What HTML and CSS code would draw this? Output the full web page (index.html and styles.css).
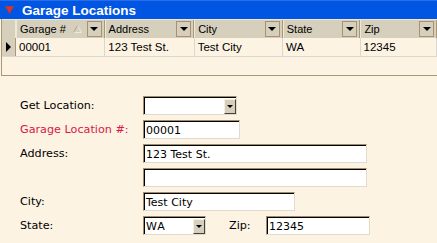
FILE: index.html
```html
<!DOCTYPE html>
<html>
<head>
<meta charset="utf-8">
<link rel="stylesheet" href="styles.css">
</head>
<body>
<div class="titlebar">
  <svg class="tri" width="9" height="8" viewBox="0 0 9 8"><path d="M0.5 0.5 H8.5 L4.5 7.5 Z" fill="#e0303a" stroke="#a04040" stroke-width="1"/></svg>
  <span class="title">Garage Locations</span>
</div>
<div class="grid">
  <div class="hrow">
    <div class="sel"></div>
    <div class="hcell c1"><span class="htext">Garage #</span>
      <svg class="sort" width="9" height="8" viewBox="0 0 9 8"><path d="M4.5 0.5 L8.5 7.5 H0.5 Z" fill="none" stroke="#ece8dc" stroke-width="1"/><path d="M4.5 0.5 L0.5 7.5" stroke="#a8a08c" stroke-width="1"/></svg>
      <span class="dd"><i></i></span></div>
    <div class="hcell c2"><span class="htext">Address</span><span class="dd"><i></i></span></div>
    <div class="hcell c3"><span class="htext">City</span><span class="dd"><i></i></span></div>
    <div class="hcell c4"><span class="htext">State</span><span class="dd"><i></i></span></div>
    <div class="hcell c5"><span class="htext">Zip</span><span class="dd"><i></i></span></div>
  </div>
  <div class="drow">
    <div class="sel"><span class="ptr"></span></div>
    <div class="dcell c1">00001</div>
    <div class="dcell c2">123 Test St.</div>
    <div class="dcell c3">Test City</div>
    <div class="dcell c4">WA</div>
    <div class="dcell c5">12345</div>
  </div>
  <div class="empty"></div>
</div>
<div class="form">
  <label class="lbl">Get Location:</label>
  <div class="fld"><div class="box combo w94"><span class="val"></span><span class="cbtn"><i></i></span></div></div>
  <label class="lbl req">Garage Location #:</label>
  <div class="fld"><div class="box w97"><span class="val">00001</span></div></div>
  <label class="lbl">Address:</label>
  <div class="fld"><div class="box w224"><span class="val">123 Test St.</span></div></div>
  <label class="lbl"></label>
  <div class="fld"><div class="box w224"><span class="val"></span></div></div>
  <label class="lbl">City:</label>
  <div class="fld"><div class="box w152"><span class="val">Test City</span></div></div>
  <label class="lbl">State:</label>
  <div class="fld row">
    <div class="box combo w63"><span class="val sp">WA</span><span class="cbtn"><i></i></span></div>
    <label class="lbl zip">Zip:</label>
    <div class="box w104"><span class="val">12345</span></div>
  </div>
</div>
</body>
</html>
```
FILE: styles.css
```css
html, body {
  margin: 0;
  padding: 0;
  background: #fcf3e3;
  width: 437px;
  height: 243px;
  overflow: hidden;
}
body {
  font-family: "DejaVu Sans", Verdana, sans-serif;
  font-size: 11px;
  color: #000;
}
.titlebar {
  background: #0055e2;
  border-top: 1px solid #2a6ee6;
  display: flex;
  align-items: center;
  box-sizing: border-box;
  height: 19px;
}
.tri {
  margin-left: 5px;
  margin-right: 8px;
}
.title {
  color: #fff;
  font-weight: bold;
  font-size: 13.5px;
  letter-spacing: 0;
  font-family: "Liberation Sans", Arial, sans-serif;
}
.grid {
  border-left: 1px solid #a89878;
  border-bottom: 1px solid #a89878;
  margin-left: 1px;
  height: 57px;
  box-sizing: border-box;
  font-family: "Liberation Sans", Arial, sans-serif;
  font-size: 11px;
}
.hrow, .drow {
  display: flex;
}
.hrow {
  height: 19px;
  background: #d6cfbc;
  border-top: 1px solid #ece8dc;
  box-sizing: border-box;
}
.sel {
  width: 13px;
  flex: none;
  border-right: 1px solid #a89878;
  position: relative;
}
.hrow .sel {
  border-right: 1px solid #ece8dc;
}
.hcell {
  display: flex;
  align-items: center;
  border-right: 1px solid #a89878;
  border-left: 1px solid #ece8dc;
  padding-left: 3px;
  box-sizing: border-box;
  position: relative;
}
.htext {
  flex: 1;
}
.c1 { width: 89px; }
.c2 { width: 90px; }
.c3 { width: 89px; }
.c4 { width: 78px; }
.c5 { width: 77px; }
.sort {
  margin-right: 5px;
}
.dd {
  width: 13px;
  height: 14px;
  border: 1px solid #a89070;
  margin-right: 2px;
  display: flex;
  align-items: center;
  justify-content: center;
}
.dd i, .cbtn i {
  width: 0;
  height: 0;
  border-left: 4px solid transparent;
  border-right: 4px solid transparent;
  border-top: 4px solid #000;
}
.drow {
  height: 19px;
  background: #fcf3e3;
  border-bottom: 1px solid #dcd8d0;
  box-sizing: border-box;
}
.drow .sel {
  background: #d6cfbc;
  border-right: 1px solid #a89878;
}
.ptr {
  position: absolute;
  left: 4px;
  top: 4px;
  width: 0;
  height: 0;
  border-top: 5px solid transparent;
  border-bottom: 5px solid transparent;
  border-left: 5px solid #000;
}
.dcell {
  border-right: 1px solid #dcd8d0;
  padding-left: 3px;
  line-height: 18px;
  box-sizing: border-box;
  font-size: 11.5px;
}
.drow .c1 { width: 90px; }
.empty {
  height: 19px;
}
.form {
  display: grid;
  grid-template-columns: 123px auto;
  row-gap: 5px;
  padding: 20px 0 0 20px;
}
.lbl {
  display: flex;
  align-items: center;
  height: 19px;
  font-size: 11.2px;
}
.req {
  color: #d81848;
}
.fld {
  display: flex;
  align-items: center;
}
.row .zip {
  margin-left: 23px;
  width: 37px;
}
.box {
  height: 19px;
  box-sizing: border-box;
  background: #fff;
  border-top: 1px solid #a08c68;
  border-left: 1px solid #a08c68;
  border-bottom: 1px solid #e2dacb;
  border-right: 1px solid #e2dacb;
  box-shadow: inset 1px 1px 0 #000;
  display: flex;
  align-items: center;
  padding-left: 2px;
  position: relative;
}
.val {
  flex: 1;
  padding-top: 1px;
  white-space: nowrap;
}
.val.sp {
  letter-spacing: 1px;
}
.w94 { width: 94px; }
.w97 { width: 97px; }
.w224 { width: 224px; }
.w152 { width: 152px; }
.w63 { width: 63px; }
.w104 { width: 104px; }
.cbtn {
  width: 12px;
  height: 15px;
  background: #d6cfbc;
  border-right: 1px solid #404040;
  border-bottom: 1px solid #404040;
  border-top: 1px solid #f4f0e8;
  border-left: 1px solid #f4f0e8;
  box-sizing: border-box;
  display: flex;
  align-items: center;
  justify-content: center;
  margin-top: 1px;
}
.cbtn i {
  border-left-width: 3px;
  border-right-width: 3px;
  border-top-width: 3px;
}
```
